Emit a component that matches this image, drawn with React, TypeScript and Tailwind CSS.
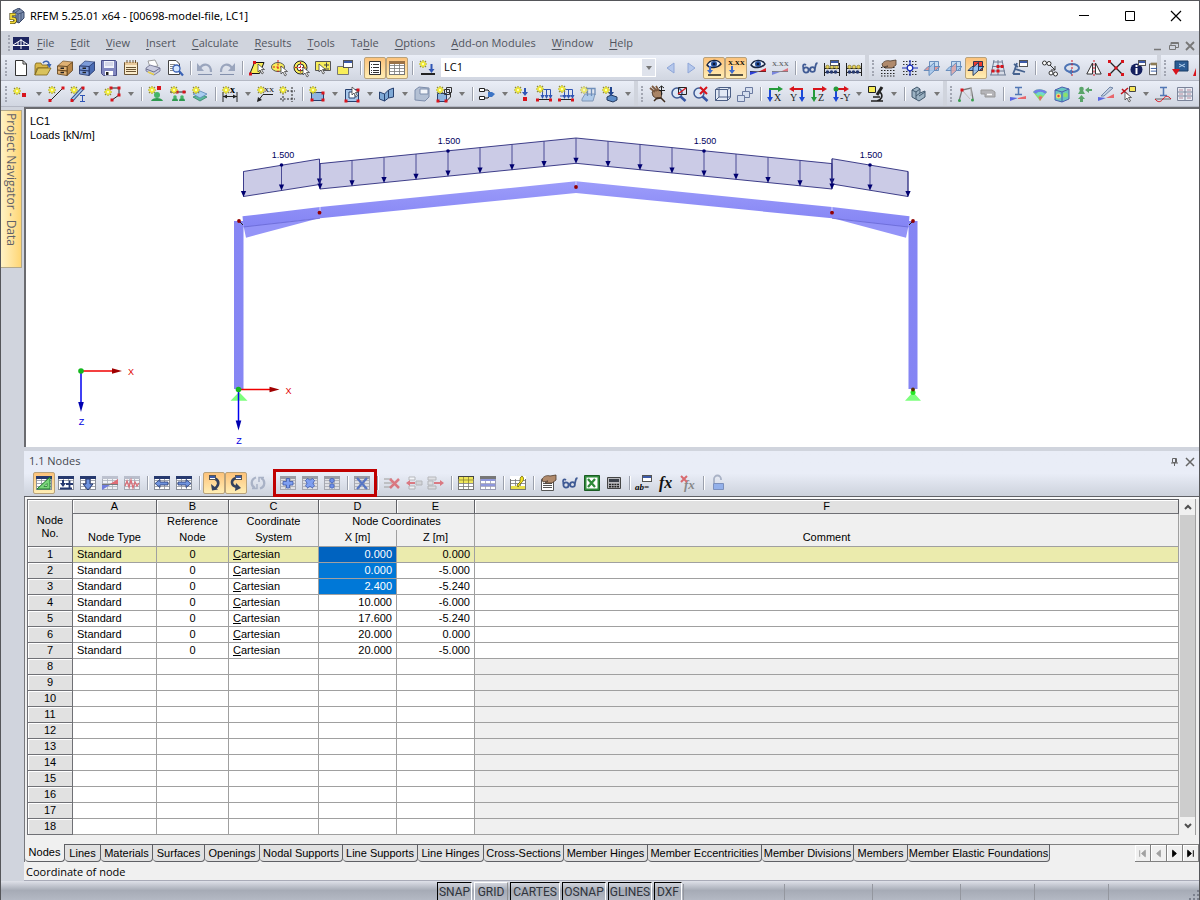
import React, { useState, type ReactNode } from 'react';

/* ---------- drawing helpers ---------- */

type LProps = { d: string; c?: string; w?: number; f?: string };
const L = ({ d, c = '#222', w = 1, f = 'none' }: LProps) => <path d={d} stroke={c} strokeWidth={w} fill={f} />;
const F = ({ d, f = '#222' }: { d: string; f?: string }) => <path d={d} fill={f} />;

const Star = ({ x = 4, y = 4 }: { x?: number; y?: number }) => (
  <g transform={`translate(${x} ${y})`}>
    <path d="M0-4V4M-4 0H4M-3-3L3 3M-3 3L3-3" stroke="#8f8a3a" strokeWidth="1.2" />
    <path d="M0-3.500V3.500M-3.500 0H3.500M-2-2L2 2M-2 2L2-2" stroke="#f4ee2c" strokeWidth="1.3" />
    <circle r="1.200" fill="#fffbb0" />
  </g>
);
const Dots = ({ p }: { p: [number, number][] }) => (
  <g fill="#d8141c">
    {p.map(([x, y]) => (
      <rect key={`${x}-${y}`} x={x - 1.5} y={y - 1.5} width="3" height="3" />
    ))}
  </g>
);
const Down = ({ x, a, b, c = '#2f55b5' }: { x: number; a: number; b: number; c?: string }) => (
  <g>
    <path d={`M${x} ${a}V${b - 2}`} stroke={c} strokeWidth="2" />
    <path d={`M${x - 3} ${b - 4}H${x + 3}L${x} ${b}Z`} fill={c} />
  </g>
);
const Cursor = ({ x = 8, y = 6 }: { x?: number; y?: number }) => (
  <path d={`M${x} ${y}v8l2-2 2 4 1.5-1-2-3.500h3z`} fill="#fff" stroke="#444" strokeWidth=".8" />
);
const Win = ({ x, y, w = 8, h = 7 }: { x: number; y: number; w?: number; h?: number }) => (
  <g>
    <rect x={x + 0.5} y={y + 0.5} width={w} height={h} fill="#fff" stroke="#555" />
    <rect x={x + 1} y={y + 1} width={w - 1} height="2" fill="#3c5aa8" />
  </g>
);
const Grid = ({ h = '#26396f', body = '#fff', line = '#8a8f9a' }: { h?: string; body?: string; line?: string }) => (
  <g>
    <rect x=".5" y="1.5" width="15" height="13" fill={body} stroke={line} />
    <path d="M0 5.500H16M0 8.500H16M0 11.500H16M5.500 2V15M10.500 2V15" stroke={line} strokeWidth=".8" />
    <rect x="0" y="1" width="16" height="3" fill={h} />
  </g>
);
const Plane = ({ c = '#5e86b8', back = '#c5dcf2', side = '#a9cbee', floor = '#e29a9a' }: { c?: string; back?: string; side?: string; floor?: string }) => (
  <g stroke={c} strokeWidth=".9">
    <path d="M5.500 1.500h9v9h-9z" fill={back} />
    <path d="M0 10.500L4 6.500H16L11.500 10.500z" fill={floor} />
    <path d="M5 7.500L10.500 2.500V10.500L5 15.500z" fill={side} fillOpacity=".85" />
  </g>
);
const Axes = ({ t, a = '#1b48d8', b = '#d8141c', flip = false }: { t: string; a?: string; b?: string; flip?: boolean }) => (
  <g>
    <path d={flip ? 'M14 3H4' : 'M2 3H12'} stroke={b} strokeWidth="2" />
    <path d={flip ? 'M0 3l5-3v6z' : 'M16 3l-5-3v6z'} fill={b} />
    <path d={flip ? 'M13 4V12' : 'M3 4V12'} stroke={a} strokeWidth="2" />
    <path d={flip ? 'M10 11h6l-3 5z' : 'M0 11h6l-3 5z'} fill={a} />
    <text x={flip ? 1 : 7} y="15" fontSize="10" fontFamily="Liberation Serif, serif" fill="#222">{t}</text>
  </g>
);
const Beads = () => (
  <g>
    <path d="M.5 3V16M15.500 3V16M0 8.500H16M0 12.500H16" stroke="#222" />
    <g fill="#26396f">
      <circle cx="3.500" cy="12" r="1.800" /><circle cx="7.500" cy="12" r="1.800" /><circle cx="11.500" cy="12" r="1.800" />
    </g>
    <g fill="#e3cf5a" stroke="#776a1b" strokeWidth=".6">
      <circle cx="3.500" cy="7" r="1.800" /><circle cx="8" cy="7" r="1.800" /><circle cx="12.500" cy="7" r="1.800" />
    </g>
  </g>
);
const Specs = () => (
  <g fill="none" stroke="#3f5a94" strokeWidth="1.800">
    <circle cx="4" cy="10" r="2.600" />
    <circle cx="10.500" cy="9.500" r="2.400" />
    <path d="M1.500 9C0 5 2 3.500 4 5M6.500 9.500h2M12.500 8.500c2-2 0-5 3-5.500" />
  </g>
);
const Cabinet = ({ a, b, c }: { a: string; b: string; c: string }) => (
  <g>
    <path d="M10 6L15.500 2V10.500L10 15.500z" fill={b} stroke={c} strokeWidth=".8" />
    <path d="M.5 6L6 1 15.500 2 10 6.500z" fill={a} stroke={c} strokeWidth=".6" />
    <path d="M.500 6L10 6.500V15.500L.500 14z" fill={a} stroke={c} strokeWidth=".8" />
    <path d="M.500 10L10 11" stroke={c} />
    <path d="M3.500 8.300h3.500M3.500 12.600h3.500" stroke="#222" strokeWidth="1.500" />
  </g>
);
const Supports = () => (
  <g>
    <L d="M0 6H16" />
    <Dots p={[[7, 6], [14, 6]]} />
    <F d="M2 15a3 3 0 0 1 6 0zM9 15a3 3 0 0 1 6 0z" f="#2f9a4f" />
    <circle cx="5" cy="11" r="1.800" fill="#46b567" /><circle cx="12" cy="11" r="1.800" fill="#46b567" />
  </g>
);
const Lens = () => (
  <g>
    <circle cx="6" cy="7" r="5" fill="#dbe9fb" fillOpacity=".7" stroke="#3f5a94" strokeWidth="1.500" />
    <path d="M9.500 10.500l5 4.500" stroke="#3555a5" strokeWidth="2.600" />
  </g>
);
const MemberLoad = () => (
  <g>
    <L d="M3 6V3.500H14.500V12M6.500 4V10M10.500 4V10" c="#2f55b5" />
    <F d="M4.500 9h4l-2 4zM8.500 9h4l-2 4zM12.500 9h4l-2 4z" f="#2f55b5" />
    <L d="M0 13.500H16" />
    <Dots p={[[1.5, 14], [14.5, 14]]} />
  </g>
);
const Diagram = ({ o = 1 }: { o?: number }) => (
  <g opacity={o}>
    <path d="M0 9.500H16" stroke="#333" />
    <path d="M0 10v5L8 10z" fill="#2c3fd8" /><path d="M8 9l8-5v5z" fill="#e2202a" />
  </g>
);
const Eye = ({ y = 5 }: { y?: number }) => (
  <g transform={`translate(8 ${y})`}>
    <path d="M-7 1C-4-5 4-5 7 0 4 4-4 5-7 1z" fill="#e8f0fa" stroke="#15233f" strokeWidth="1.400" />
    <circle r="3" fill="#27509c" /><circle r="1.300" fill="#0b1530" />
  </g>
);
const Hand = () => <path d="M2 4c2-3 5-4 8-3l6-1v5l-4 3H5l3-2-5 1z" fill="#b08a6c" stroke="#4b382a" strokeWidth=".8" />;

const sw = 'Liberation Serif, serif';

const icons: Record<string, ReactNode> = {
  new: <g><path d="M2.500.5H10L13.500 4V15.500H2.500Z" fill="#fff" stroke="#333" /><path d="M10 .5V4H13.500" fill="none" stroke="#333" /></g>,
  open: <g><path d="M0 5V15L2 8H13V5H7L6 3H1z" fill="#d8b74a" stroke="#7b6215" strokeWidth=".8" /><path d="M0 15L3 8H16L12 15z" fill="#d9c25c" stroke="#7b6215" strokeWidth=".8" /><path d="M8 3c2-3 6-2 6 1" fill="none" stroke="#3c64b0" strokeWidth="1.500" /><path d="M11.500 4h5l-2 4z" fill="#3c64b0" /></g>,
  cabTan: <Cabinet a="#e0b173" b="#b98646" c="#5b3c15" />,
  cabBlue: <Cabinet a="#7c9bd8" b="#4a6cb3" c="#1d2f63" />,
  save: <g><path d="M.5.5H14.500L15.500 1.500V15.500H2.500L.5 13.500Z" fill="#8288c0" stroke="#4a5088" /><path d="M3 1h10v7H3z" fill="#f0f2fa" /><path d="M4 3h8M4 5h8" stroke="#b9bdd8" /><path d="M4 11h8v4.500H4z" fill="#fff" /><path d="M5 12h2.500v3H5z" fill="#222" /></g>,
  notes: <g><path d="M1.500 2.500h13v12h-13z" fill="#fbeccb" stroke="#6b5434" /><path d="M2 2h12v3H2z" fill="#e8c89a" /><path d="M3 7.500h10M3 9.500h10M3 11.500h10M4 0v3M7 0v3M10 0v3M12.500 0v3" stroke="#6b5434" /></g>,
  print: <g><path d="M3 1l7-1 3 6-8 1z" fill="#fff" stroke="#888" strokeWidth=".8" /><path d="M1 8l4-3 10 3v3l-6 4-8-4z" fill="#c9cbe0" stroke="#6a6d8b" strokeWidth=".8" /><path d="M1 9l8 3 6-4" fill="none" stroke="#6a6d8b" /><path d="M3 12l6 2.500" stroke="#ead34a" strokeWidth="1.500" /></g>,
  preview: <g><path d="M1.500.5H9L12.500 4V14.500H1.500Z" fill="#fff" stroke="#444" /><path d="M3 4.500h5M3 6.500h7M3 8.500h4M3 10.500h3" stroke="#888" /><circle cx="9.500" cy="8.500" r="3.500" fill="#d4e6ff" stroke="#3a62b5" strokeWidth="1.300" /><path d="M12 11l4 4.500" stroke="#3a62b5" strokeWidth="2.200" /></g>,
  undo: <g><path d="M3 8c3-5 11-5 11 4" fill="none" stroke="#9aa5bd" strokeWidth="2.200" /><path d="M0 3v8h7z" fill="#9aa5bd" /><path d="M1 14.500H15" stroke="#8390ac" /></g>,
  redo: <g><path d="M13 8c-3-5-11-5-11 4" fill="none" stroke="#9aa5bd" strokeWidth="2.200" /><path d="M16 3v8H9z" fill="#9aa5bd" /><path d="M1 14.500H15" stroke="#8390ac" /></g>,
  selRhomb: <g><path d="M5.500 2.500H15L10.500 13.500H1z" fill="#f8ee5a" stroke="#111" /><Dots p={[[5.5, 2.5], [1.5, 14]]} /><Cursor x={9} y={4} /></g>,
  selEllipse: <g><ellipse cx="7" cy="7" rx="6.500" ry="4.500" fill="#f8ee5a" stroke="#555" /><path d="M7 0v12M2 7h10" stroke="#d8141c" strokeDasharray="2 1.500" /><Cursor x={10} y={6} /></g>,
  selRing: <g><circle cx="7.500" cy="7.500" r="6.500" fill="#f8ee5a" stroke="#222" /><circle cx="7.500" cy="7.500" r="3.500" fill="#fff" stroke="#222" /><path d="M7.500 2v11M2 7.500h11" stroke="#d8141c" strokeDasharray="2 1.500" /><Cursor x={10} y={7} /></g>,
  selRect: <g><path d="M.5 1.500h15v9H.5z" fill="#f8ee5a" stroke="#555" /><path d="M9 5h5M11.500 2.500v5M9 9h5" stroke="#444" /><Cursor x={4} y={4} /></g>,
  selWin: <g><path d="M.5 6.500h11v8h-11z" fill="#f8ee5a" stroke="#777" /><Win x={6} y={0} w={9} h={7} /></g>,
  navTab: <g><path d="M2.500 1.500h11v13h-11z" fill="#fff" stroke="#333" /><path d="M4 4.500h1M4 7.500h1M4 10.500h1M4 12.500h1M6 4.500h6M6 7.500h6M6 10.500h6M6 12.500h6" stroke="#333" /></g>,
  tblTab: <Grid h="#9a7246" body="#fff" line="#777" />,
  newLc: <g><Star x={4} y={4} /><Down x={12.5} a={4} b={13} /><L d="M2 14H16" w={2} /></g>,
  prev: <path d="M12 3v10L5 8z" fill="#b5c8ec" stroke="#8fa6d8" />,
  next: <path d="M4 3v10l7-5z" fill="#b5c8ec" stroke="#8fa6d8" />,
  eyeLoad: <g><Eye y={4} /><Down x={4} a={6} b={14} c="#3c6ad0" /><L d="M2 15H15" w={1.5} /></g>,
  xLoad: <g><text x="0" y="5" fontSize="7" fontFamily={sw} fontWeight="bold">X.XX</text><Down x={4} a={6} b={14} c="#3c6ad0" /><L d="M2 15H15" w={1.5} /></g>,
  eyeRes: <g><Eye y={4} /><path d="M0 11v4l8-3z" fill="#2c3fd8" /><path d="M8 12l8-4v4z" fill="#e2202a" /><L d="M0 11.500H16" w={0.6} /></g>,
  xRes: <g opacity=".55"><text x="0" y="6" fontSize="7" fontFamily={sw} fontWeight="bold">X.XX</text><path d="M0 11v4l8-3z" fill="#2c3fd8" /><path d="M8 12l8-4v4z" fill="#e2202a" /><L d="M0 11.500H16" w={0.8} /></g>,
  specs: <Specs />,
  abacusWin: <g><Beads /><Win x={6} y={0} w={8} h={5} /></g>,
  abacus: <Beads />,
  gridHand: <g><path d="M1 7.500h15M1 10.500h15M1 13.500h15M1 16h15" stroke="#222" strokeDasharray="1.500 1.500" /><Hand /></g>,
  gridCross: <g><path d="M1 1.500h15M1 4.500h15M1 11.500h15M1 14.500h15" stroke="#333" strokeDasharray="1.500 1.500" /><path d="M8 0v16M0 8h16" stroke="#1d2fb5" strokeWidth="1.200" /><circle cx="8" cy="8" r="2.800" fill="#fff" stroke="#1d2fb5" strokeWidth="1.300" /></g>,
  planeA: <Plane />,
  planeB: <Plane side="#e2a5a5" floor="#a9cbee" />,
  planeC: <Plane back="#f03a2c" side="#9cc6f2" floor="#7fb2ea" c="#1c2c50" />,
  gridRed: <g><path d="M3 2h9M2 6.500h12M1 11h14M0 15h16M4 0L1 15M8 0v15M12 0l3 15" stroke="#6e7c94" fill="none" /><Dots p={[[8, 6.5], [3, 11], [8, 11], [12, 6.5]]} /></g>,
  netWin: <g><path d="M5 3L3 9l10 3M3 9l-2 5M2 4l4 3M1 14h7" fill="none" stroke="#45628f" strokeWidth="1.800" /><Win x={7} y={0} w={8} h={6} /></g>,
  move: <g fill="#fff" stroke="#333"><circle cx="2.500" cy="3" r="2" /><circle cx="7" cy="3.500" r="2" /><circle cx="9" cy="13" r="2" /><circle cx="13.500" cy="14" r="2" /><path d="M8 5l5 5M13 6v4H9" fill="none" /></g>,
  rotate: <g><ellipse cx="8" cy="8" rx="7" ry="4" fill="none" stroke="#4d74b5" strokeWidth="2" /><path d="M8 0v16" stroke="#d8141c" strokeDasharray="2 1.500" /><path d="M8 9v6l-4-3z" fill="#4d74b5" /></g>,
  mirror: <g><path d="M6.500 3v11H.8zM9.500 3v11h5.700z" fill="#fff" stroke="#333" /><path d="M8 0v16" stroke="#d8141c" strokeDasharray="2 1.500" /></g>,
  explode: <g><L d="M1 1L15 15M15 1L1 15" w={1.3} /><Dots p={[[1.5, 1.5], [14.5, 1.5], [1.5, 14.5], [14.5, 14.5], [8, 8]]} /></g>,
  info: <g><circle cx="6.500" cy="9.500" r="6" fill="#14205e" /><path d="M6.500 5v2M6.500 8v6" stroke="#fff" strokeWidth="2" /><Win x={8} y={0} w={7} h={5} /></g>,
  clip: <g><path d="M7.500 3.500h8v12h-8z" fill="#fff" stroke="#444" /><path d="M9 2h7v3H9z" fill="#8b7a55" /><path d="M9 8.500h7M9 11.500h7" stroke="#27509c" /></g>,
  addon: <g><path d="M3 1h13v10H3z" fill="#2a5c94" stroke="#183c66" /><path d="M7 4l6 3M7 7l6-3" stroke="#b5d3f0" /><path d="M0 9h8l-4 6z" fill="#d8141c" /></g>,
  sliver: <path d="M5 16V8l-3 8z" fill="#d8141c" />,

  node: <g><Star x={4} y={5} /><path d="M9 7h4v4H9z" fill="#d8141c" /></g>,
  line: <g><L d="M3 14L15 2" /><Dots p={[[2, 14.5], [15, 2]]} /><Star x={4} y={4} /></g>,
  member: <g><path d="M2 14L13 2" stroke="#2f4f85" strokeWidth="3.500" /><path d="M2 14L13 2" stroke="#a9c9f0" strokeWidth="1.800" /><Dots p={[[2, 14.5], [13, 2]]} /><Star x={4} y={4} /><path d="M10 9.500h5M12.500 10v5M10 15.500h5" stroke="#2f55b5" /></g>,
  polyline: <g><L d="M5 2h9v7L7 14" /><Dots p={[[6, 2], [14, 2], [14, 9], [7, 14]]} /><Star x={3} y={6} /></g>,
  support: <g><Star x={4} y={4} /><path d="M9 0h4v4H9z" fill="#d8141c" /><path d="M3 15c1-4 11-4 12 0z" fill="#2f9a4f" /><circle cx="9" cy="9" r="3" fill="#46b567" /></g>,
  lineSupport: <g><Supports /><Star x={4} y={4} /></g>,
  surfSupport: <g><path d="M1 11l7-3 7 3-7 4z" fill="#5bb89a" stroke="#36836a" strokeWidth=".8" /><path d="M1 8l7-3 7 3-7 4z" fill="#a9cdf0" stroke="#5a86b5" strokeWidth=".8" /><Star x={4} y={4} /></g>,
  dim: <g><L d="M1 6V16M15 6V16M1 10.500H15" /><F d="M1 10.500l4-2v4zM15 10.500l-4-2v4z" /><text x="8" y="7" fontSize="10" fontFamily={sw} fontWeight="bold">x</text><Star x={4} y={4} /></g>,
  note: <g><L d="M1 15L6 8.500H16" /><F d="M0 16l1-5 4 3z" /><text x="7" y="6" fontSize="7" fontFamily={sw}>XX</text><Star x={4} y={4} /></g>,
  guide: <g><path d="M4 3v13M13 1v15M1 5h15M1 13h15" stroke="#222" strokeDasharray="2 1.500" /><Star x={4} y={4} /></g>,
  surface: <g><path d="M2.500 6.500h12v8h-12z" fill="#8fb5e0" stroke="#26406f" /><Dots p={[[3, 14], [14, 7], [14, 14]]} /><Star x={4} y={4} /></g>,
  opening: <g><path d="M1.500 3.500h13v12h-13z" fill="#a9c9ec" stroke="#26406f" /><path d="M5 6h6v6H5z" fill="#fff" stroke="#26406f" /><Cursor x={8} y={1} /><Dots p={[[2, 15], [14, 15], [14, 4]]} /></g>,
  bent: <g><path d="M.5 6l5 2 4-4 5-2v9l-5 1-4 3-5-2z" fill="#7fa9d6" stroke="#26406f" /><path d="M5.500 8v7M9.500 4v8" stroke="#26406f" /></g>,
  solid: <g><path d="M1 4l4-3 10 1v9l-4 4-10-1z" fill="#b3c0d4" stroke="#7d8dab" /><path d="M6 3h8v5H6z" fill="#f2f5fa" stroke="#7d8dab" /></g>,
  solidNew: <g><path d="M1.500 7.500h9v8h-9z" fill="#8fb5e0" stroke="#26406f" /><path d="M8.500 3.500h5v5h-5zM10.500 1.500h5v5h-5z" fill="none" stroke="#333" /><path d="M10.500 15l4-4V7" fill="none" stroke="#333" /><Dots p={[[2, 15], [10, 15]]} /><Star x={4} y={4} /></g>,
  parts: <g><path d="M.5 2.500h5v3h-5zM.5 10.500h5v3h-5z" fill="#fff" stroke="#222" /><path d="M6 4h3l3 4-3 4H6" fill="none" stroke="#222" /><path d="M9 6h4l3 2-3 3H9z" fill="#3c74c5" /></g>,
  nodeLoad: <g><Star x={4} y={4} /><Down x={11} a={2} b={10} /><path d="M9 11h4v4H9z" fill="#d8141c" /></g>,
  memLoad: <g><MemberLoad /><Star x={4} y={3} /></g>,
  lineLoad: <g><MemberLoad /><Star x={4} y={3} /><path d="M2 10h13" stroke="#2f55b5" /></g>,
  surfLoad: <g opacity=".7"><path d="M2 13l3-5h10l-2 7H2z" fill="#9fc3ea" stroke="#5a7aa5" /><path d="M4 2.500h11V9M7.500 3v7M11.500 3v7" fill="none" stroke="#3f6aa5" strokeWidth="1.300" /><Star x={4} y={4} /></g>,
  genLoad: <g><path d="M5 11l4-2 6 2v3l-4 2-6-2z" fill="#5c8cc8" stroke="#22385f" /><Down x={9} a={1} b={10} c="#22458f" /><Star x={4} y={4} /></g>,
  handPan: <g><path d="M3 6l3-2 5 0 2 3-1 5-4 1-4-3z" fill="#a98466" stroke="#3c2a1c" strokeWidth=".8" /><path d="M1 2l5 4M3 0l5 5M7 0l3 5" stroke="#7d5a40" strokeWidth="1.800" /><path d="M12.500 0v9M10 4.500h6M10 2l2.500-2L15 2" stroke="#222" fill="none" /><path d="M5 15l3-3h4l4 4" stroke="#3c2a1c" strokeWidth="1.500" fill="none" /></g>,
  zoomWin: <g><Lens /><path d="M7.500 1.500h8v7h-8z" fill="none" stroke="#222" /><path d="M7 8l8-6" stroke="#d8141c" strokeWidth="1.300" /></g>,
  zoomX: <g><Lens /><path d="M7 1l7 7M14 1L7 8" stroke="#d8141c" strokeWidth="2" /></g>,
  cube: <g><path d="M.5 3.500l3-2h12v10l-3 3h-12z" fill="#e3eaf5" stroke="#4c5f85" /><path d="M.5 3.500h12v11M12.500 3.500l3-2M4 2v9h11M4 11l-3.500 3.500" fill="none" stroke="#4c5f85" /></g>,
  stack: <g fill="#d5deef" stroke="#6b7aa0"><path d="M8.500 1.500h7v6h-7z" /><path d="M5.500 5.500h7v6h-7z" /><path d="M.5 9.500h7v6h-7z" /></g>,
  axX: <Axes t="X" b="#259b3a" />,
  axY: <Axes t="Y" flip />,
  axZ: <Axes t="Z" a="#259b3a" />,
  axMY: <g><Axes t="-Y" /><circle cx="3" cy="3" r="2.500" fill="#259b3a" /></g>,
  scope: <g><path d="M.5.5h7v6h-7z" fill="#f8ee5a" stroke="#222" /><path d="M14 1L9 9" stroke="#222" strokeWidth="3" /><path d="M3 15h12M5 11h7M12 6c4 4 1 8-3 9" stroke="#222" strokeWidth="1.600" fill="none" /></g>,
  clipSolid: <g><path d="M1 4l5-3 3 2v4l5-2v6l-6 4-7-4z" fill="#9db3c4" stroke="#42596e" /><path d="M1 4l4 2v7M5 6l4-3M9 7l-4 3M8 10l6-4" fill="none" stroke="#42596e" /></g>,
  frame: <g><path d="M1 15L4 4 13 2l2 11" fill="none" stroke="#777" strokeWidth="1.300" /><path d="M4 4l8 9M13 2v8" stroke="#bbb" /><g fill="#3aa04f"><circle cx="1.500" cy="14.500" r="1.500" /><circle cx="14.500" cy="14" r="1.500" /></g><Dots p={[[4, 4]]} /></g>,
  tube: <g><path d="M1 4h11l3 2v5H5V8H1z" fill="#b4b4b8" stroke="#999" /><path d="M7 8.500h5" stroke="#fff" strokeWidth="1.500" /></g>,
  iDiag: <g><L d="M5 1.500h7M8.500 2v6M5 8.500h7" c="#5277b5" w={1.5} /><path d="M0 11v4l8-3z" fill="#5a66e0" /><path d="M8 12l8-2v3H8z" fill="#e8666c" /></g>,
  surfRes: <g><path d="M1 6c4-4 10-3 14 0l-7 9z" fill="#8be06a" /><path d="M1 6c4-4 10-3 14 0l-2 2C9 5 6 6 4 8z" fill="#6d7fe8" /><path d="M4 8c3-3 6-3 9 0l-2 2c-2-2-3-2-5 0z" fill="#6fd8d0" /><path d="M6.500 11c1-1 3-1 4 0L8 15z" fill="#e8666c" /></g>,
  solRes: <g><path d="M1 4l7-3 7 2v10l-7 3-7-2z" fill="#68c6c0" stroke="#4a5fb0" /><path d="M1 4l7 2 7-3M8 6v10" fill="none" stroke="#4a5fb0" /><circle cx="4.500" cy="10" r="2.500" fill="#eee06a" /><circle cx="4.500" cy="10" r="1.200" fill="#e04040" /><circle cx="11.500" cy="9" r="2.300" fill="#8be06a" /></g>,
  react: <g fill="#5aa56a"><path d="M2 8h7L5.500 2zM7 16v-3h2l-3.500-4L2 13h2v3z" /><circle cx="5.500" cy="3" r="2.300" /><path d="M16 3h-3V1L9 4l4 3V5h3z" /></g>,
  beamDiag: <g><path d="M3 10L12 1l3 1-9 8z" fill="#c3d0e2" stroke="#7186a8" /><path d="M0 11v4l8-3z" fill="#5a66e0" /><path d="M8 12l8-4v4z" fill="#e8666c" /></g>,
  pick: <g><L d="M1 8L8 2M2 3l6 6" c="#c01018" w={1.5} /><path d="M9.500.5h6v5h-6z" fill="#f8e85a" stroke="#444" /><Cursor x={5} y={6} /></g>,
  iWave: <g><L d="M5 1.500h7M8.500 2v7M5 9.500h7" c="#5277b5" w={1.5} /><path d="M0 13h16" stroke="#444" strokeWidth=".8" /><path d="M0 13c3 4 6 3 8 0s5-4 8 0" fill="none" stroke="#d8141c" /></g>,
  panels: <g><path d="M.5 1.500h15v13H.5zM8 2v12M0 6h16M0 10h16" fill="#e9ecf4" stroke="#7b8399" /><path d="M2 4h4M10 4h4M2 8h4M10 8h4M2 12h4M10 12h4" stroke="#b58a9a" /></g>,

  gTri: <g><Grid /><path d="M1 14L14 2V14z" fill="#7ad67a" stroke="#1f7a2b" /><path d="M8 11.500L11 8.500V11.500z" fill="#fff" stroke="#1f7a2b" strokeWidth=".8" /></g>,
  gPlus: <g><Grid /><path d="M1 6h14v8H1z" fill="#fff" /><Down x={5} a={5} b={12} c="#26396f" /><path d="M8 9h7M11.500 5.500v7M2 13.500h12" stroke="#26396f" strokeWidth="1.800" /></g>,
  gDown: <g><Grid /><path d="M6 4h4v5h3l-5 6-5-6h3z" fill="#6f93de" stroke="#26396f" /></g>,
  gDiag: <g opacity=".6"><Grid h="#a3a8b8" /><Diagram /></g>,
  gWave: <g opacity=".65"><Grid h="#a3a8b8" /><path d="M1 11l2-5 2 6 2-7 2 8 2-6 2 4 2-3" fill="none" stroke="#d8343c" strokeWidth="1.300" /></g>,
  gLeft: <g><Grid /><path d="M1 8.500l5-4v2.500h8v3H6v2.500z" fill="#6f93de" stroke="#26396f" strokeWidth=".8" /></g>,
  gRight: <g><Grid /><path d="M15 8.500l-5-4v2.500H2v3h8v2.500z" fill="#6f93de" stroke="#26396f" strokeWidth=".8" /></g>,
  linkA: <g><path d="M9 3.500C14 6 13 11 8 14" fill="none" stroke="#33405e" strokeWidth="2.600" /><path d="M5 9l1 6.500 6-1z" fill="#33405e" /><Win x={3} y={0} w={6} h={4} /></g>,
  linkB: <g><path d="M8 3C2 5 3 11 9 12" fill="none" stroke="#33405e" strokeWidth="2.600" /><path d="M8 8l5 5-6 3z" fill="#33405e" /><Win x={7} y={0} w={6} h={4} /></g>,
  refresh: <g fill="none" stroke="#a9b2c6" strokeWidth="2.300"><path d="M6 2.500C.5 4 .5 11 5 13M10 13.500c5.500-1.500 5.500-8.500 1-10.500" /><path d="M2 13.500h5V9M14 2.500H9V7" strokeWidth="1.500" /></g>,
  opPlus: <g><Grid h="#9a9ca5" body="#dfe0e5" line="#a5a7b0" /><path d="M6.500 3.500h3v3h3.500v3.500H9.500v3h-3v-3H3V6.500h3.500z" fill="#7f9ff0" stroke="#3a58ac" strokeWidth=".8" /></g>,
  opMul: <g><Grid h="#9a9ca5" body="#dfe0e5" line="#a5a7b0" /><path d="M3.500 5.500l2-2L8 5l2.500-1.500 2 2L11 8.300l1.500 2.500-2 2L8 11.500l-2.500 1.300-2-2L5 8.300z" fill="#7f9ff0" stroke="#3a58ac" strokeWidth=".8" /></g>,
  opDiv: <g><Grid h="#9a9ca5" body="#dfe0e5" line="#a5a7b0" /><circle cx="8" cy="5.500" r="2.200" fill="#6f8fe8" stroke="#3a58ac" strokeWidth=".7" /><circle cx="8" cy="11" r="2.200" fill="#6f8fe8" stroke="#3a58ac" strokeWidth=".7" /></g>,
  opDel: <g><Grid h="#9a9ca5" body="#dfe0e5" line="#a5a7b0" /><path d="M3 3l10 11M13 3L3 14" stroke="#5876c4" strokeWidth="2.300" /></g>,
  rowDel: <g opacity=".6"><path d="M0 3h8v2H0zM0 7h8v2H0zM0 11h8v2H0z" fill="#aaa" /><path d="M6 4l9 9M15 4l-9 9" stroke="#d8343c" strokeWidth="2.500" /></g>,
  rowIn: <g opacity=".6"><path d="M3 2h6v3H3zM3 11h6v3H3z" fill="#fff" stroke="#999" /><path d="M10 6h6v4h-6z" fill="#ccc" stroke="#999" /><path d="M0 8l4-3v2h5v2H4v2z" fill="#d8343c" /></g>,
  rowOut: <g opacity=".6"><path d="M0 2h8v3H0zM0 11h8v3H0zM0 6h5v4H0z" fill="#ddd" stroke="#999" /><path d="M16 8l-4-3v2H6v2h6v2z" fill="#d8343c" /></g>,
  tYellow: <g><Grid h="#444" body="#fff" line="#777" /><path d="M1 2h14v6H1z" fill="#efe65a" /><path d="M0 5h16M5.500 2v6M10.500 2v6" stroke="#8a8430" strokeWidth=".8" /></g>,
  tBlue: <g><Grid h="#777" body="#fff" line="#9a9cb5" /><path d="M1 4h14v2H1zM1 9h14v2H1z" fill="#8f97dc" /></g>,
  tBulb: <g><Grid h="#fff" body="#fff" line="#777" /><path d="M1 11h14v3H1z" fill="#e9e04a" /><path d="M12 1c3 2 1 6-1 7l-3 4-1-2 3-3c0-3 0-5 2-6z" fill="#f7e71f" stroke="#6b6210" strokeWidth=".8" /></g>,
  form: <g><path d="M1.500 4.500h12v11h-12z" fill="#fff" stroke="#555" /><path d="M3 8.500h9M3 10.500h9M3 12.500h9" stroke="#555" /><Hand /></g>,
  excel: <g><path d="M.5.5h15v15H.5z" fill="#2f8a3a" stroke="#1b5c24" /><path d="M2.500 2.500h11v11h-11z" fill="#fff" /><path d="M4 4l7 8M11 4l-7 8" stroke="#2f8a3a" strokeWidth="2.300" /></g>,
  calc: <g><path d="M1.500 2.500h13v11h-13z" fill="#b8b8bc" stroke="#444" /><path d="M3 4h10v3H3z" fill="#3a3f48" /><path d="M3 9.500h10M3 11.800h10" stroke="#222" strokeWidth="1.500" strokeDasharray="2 .7" /></g>,
  abEq: <g><Win x={6} y={0} w={9} h={6} /><text x="-1" y="15" fontSize="9" fontStyle="italic" fontWeight="bold" fontFamily={sw}>ab=</text></g>,
  fx: <text x="1" y="13" fontSize="16" fontStyle="italic" fontWeight="bold" fontFamily={sw} fill="#111">fx</text>,
  fxDel: <g><text x="4" y="14" fontSize="13" fontStyle="italic" fontWeight="bold" fontFamily={sw} fill="#888">fx</text><path d="M1 1l6 6M7 1L1 7" stroke="#d86a70" strokeWidth="2" /></g>,
  lock: <g><path d="M4 8V4a3.500 3.500 0 0 1 7 0v1" fill="none" stroke="#a9b2c6" strokeWidth="1.800" /><path d="M3.500 8.500h10v6h-10z" fill="#93b0ea" stroke="#7c90bd" /></g>,
};

/* ---------- toolbar parts ---------- */

const Icon = ({ n }: { n: string }) => (
  <svg viewBox="0 0 16 16" className="size-4 shrink-0 overflow-visible" aria-hidden="true">{icons[n]}</svg>
);

const Tool = ({ n }: { n: string }) => {
  const on = n.startsWith('*');
  const name = on ? n.slice(1) : n;
  return (
    <button
      type="button"
      aria-label={name}
      aria-pressed={on}
      className={`flex h-[22px] w-[22px] shrink-0 items-center justify-center ${on ? 'rounded-xs border border-[#b9a27a] bg-linear-to-b from-[#fcc27a] to-[#ffeeb4]' : ''}`}
    >
      <Icon n={name} />
    </button>
  );
};

const Sep = () => (
  <span className="flex w-2 shrink-0 justify-center">
    <span className="h-3.5 w-px bg-[#9ba0ac] shadow-[1px_0_0_#fff]" />
  </span>
);
const Grip = () => (
  <span className="flex w-2 shrink-0 justify-center">
    <span className="h-4 border-l-2 border-dotted border-[#a2a6b2]" />
  </span>
);
const Break = () => <span className="w-1 shrink-0 self-stretch bg-[#d0d4dd]" />;
const Drop = () => (
  <button type="button" aria-label="More" className="flex h-[22px] w-[13px] shrink-0 items-center justify-center">
    <svg viewBox="0 0 6 4" className="h-1 w-1.5" aria-hidden="true"><path d="M0 0h6L3 4z" fill="#777" /></svg>
  </button>
);

const Tools = ({ spec }: { spec: string }) => (
  <>
    {spec.split(' ').map((t, i) => {
      if (t === '|') return <Sep key={i} />;
      if (t === '::') return <Grip key={i} />;
      if (t === '//') return <Break key={i} />;
      if (t === 'v') return <Drop key={i} />;
      return <Tool key={i} n={t} />;
    })}
  </>
);

const menus: [string, string, string][] = [
  ['', 'F', 'ile'], ['', 'E', 'dit'], ['', 'V', 'iew'], ['', 'I', 'nsert'], ['', 'C', 'alculate'], ['', 'R', 'esults'],
  ['', 'T', 'ools'], ['Ta', 'b', 'le'], ['', 'O', 'ptions'], ['', 'A', 'dd-on Modules'], ['', 'W', 'indow'], ['', 'H', 'elp'],
];

/* ---------- model view ---------- */

const loadArrows = () => {
  const out: [number, number, number][] = [[243.5, 171.5, 196.5], [281.5, 165, 190], [319.5, 159, 184], [908, 171.5, 196.5], [870, 165, 190], [832, 159, 184]];
  for (let i = 0; i <= 16; i++) {
    const top = 138 + Math.abs(i - 8) * 3.2;
    out.push([320 + i * 32, top, top + 25.3]);
  }
  return out;
};

const ModelView = () => (
  <svg viewBox="26 109 1173 338" preserveAspectRatio="xMidYMin meet" className="absolute inset-0 h-full w-full" role="img" aria-label="Frame model with loads">
    <defs>
      <linearGradient id="beam" x1="0" y1="0" x2="0" y2="1"><stop offset="0" stopColor="#9c9cfa" /><stop offset="1" stopColor="#8484f4" /></linearGradient>
      <linearGradient id="post"><stop offset="0" stopColor="#8686f4" /><stop offset=".4" stopColor="#9797fa" /><stop offset="1" stopColor="#8484f4" /></linearGradient>
    </defs>
    <g fill="#cbcbe6" stroke="#14146e" strokeWidth=".8">
      <path d="M243.500 171.500L319.500 159V184.500L243.500 196.500z" />
      <path d="M320 163.600L576 138L832 163.600V189L576 163.300L320 189z" />
      <path d="M832 158.700L908 171.500V196.500L832 184z" />
    </g>
    {loadArrows().map(([x, a, b], i) => (
      <g key={i}>
        <path d={`M${x} ${a}V${b - 3}`} stroke="#3c3c8c" strokeWidth=".9" />
        <path d={`M${x - 2.6} ${b - 5.5}h5.200L${x} ${b + 0.5}z`} fill="#000070" />
      </g>
    ))}
    <g fill="#000070">
      <circle cx="281.500" cy="165" r="1.800" /><circle cx="448" cy="151" r="1.800" /><circle cx="704" cy="151" r="1.800" /><circle cx="870" cy="165" r="1.800" />
    </g>
    <g fill="#000060" fontFamily="Liberation Sans, sans-serif" fontSize="9" textAnchor="middle">
      <text x="283" y="158">1.500</text><text x="449" y="144">1.500</text><text x="705" y="144">1.500</text><text x="871" y="158">1.500</text>
    </g>
    <path d="M243.500 226L246 237.700L320 218zM908.500 226L906 237.700L832 218z" fill="#9494f8" />
    <path d="M242.500 216.300L320 207L576 181.300L832 207L909.500 216.300L908.500 227L832 218.300L576 193L320 218.300L243.500 227z" fill="url(#beam)" />
    <path d="M243.500 227L320 218.300M908.500 227L832 218.300" stroke="#5b5bc8" strokeWidth=".6" />
    <path d="M320 207v5M576 181v5M832 207v5" stroke="#dcdcff" />
    <path d="M234 221h9.500v168H234zM908.500 221h9v168h-9z" fill="url(#post)" />
    <path d="M239 221l4 4M913 221l-4 4" stroke="#222" />
    <g fill="#7dff7d"><path d="M239 392l8.500 8.700h-17zM913 392l8 8.700h-16z" /></g>
    <g fill="#920000">
      <circle cx="239" cy="221" r="1.900" /><circle cx="319.500" cy="212.700" r="1.900" /><circle cx="576" cy="187" r="1.900" /><circle cx="832" cy="212.700" r="1.900" /><circle cx="913" cy="221" r="1.900" />
    </g>
    <circle cx="913" cy="392.500" r="2.500" fill="#26e626" /><circle cx="913" cy="389.500" r="1.900" fill="#5a3000" />
    {[[81, 371], [238.5, 389.5]].map(([x, y]) => (
      <g key={x}>
        <path d={`M${x} ${y}h32`} stroke="#f00000" strokeWidth="1.500" />
        <path d={`M${x + 31} ${y - 2.8}l10 2.800l-10 2.800z`} fill="#a00000" />
        <path d={`M${x} ${y}v32`} stroke="#0000f0" strokeWidth="1.500" />
        <path d={`M${x - 2.8} ${y + 31}h5.600l-2.800 10z`} fill="#0000b0" />
        <circle cx={x} cy={y} r="2.800" fill="#14b81e" />
        <text x={x + 50} y={y + 4} fontSize="9" textAnchor="middle" fontFamily="Liberation Sans, sans-serif" fill="#e00000">X</text>
        <text x={x + 0.5} y={y + 54} fontSize="9" textAnchor="middle" fontFamily="Liberation Sans, sans-serif" fill="#0000e0">Z</text>
      </g>
    ))}
  </svg>
);

/* ---------- data table ---------- */

const rows: [string, string][] = [['0.000', '0.000'], ['0.000', '-5.000'], ['2.400', '-5.240'], ['10.000', '-6.000'], ['17.600', '-5.240'], ['20.000', '0.000'], ['20.000', '-5.000']];

const letter = 'h-[15px] border-y border-r border-t-[#5f6065] border-r-[#5f6065] border-b-[#6f7075] bg-[#e1e1e1] p-0 font-normal leading-[13px] shadow-[inset_1px_1px_0_#fff]';
const head = 'h-4 border-r border-[#a0a0a0] bg-[#f0f0f0] p-0 align-top font-normal leading-[14px]';
const head2 = 'h-[17px] border-r border-b border-[#a0a0a0] bg-[#f0f0f0] p-0 align-top font-normal leading-[14px]';
const cell = 'h-4 border-r border-b border-[#a0a0a0] p-0 leading-[15px]';

const NodesTable = () => (
  <table className="w-full table-fixed border-separate border-spacing-0 text-center text-[11px] text-black">
    <colgroup>
      <col className="w-[46px]" /><col className="w-[84px]" /><col className="w-[72px]" /><col className="w-[90px]" />
      <col className="w-[78px]" /><col className="w-[78px]" /><col />
    </colgroup>
    <thead>
      <tr>
        <th rowSpan={3} scope="col" className="border border-[#6f7075] bg-[#e1e1e1] p-0 pt-2 text-center align-middle font-normal leading-[13px] shadow-[inset_1px_1px_0_#fff]">Node<br />No.</th>
        {['A', 'B', 'C', 'D', 'E', 'F'].map((c) => (
          <th key={c} scope="col" className={letter}>{c}</th>
        ))}
      </tr>
      <tr>
        <th className={head} />
        <th className={head}>Reference</th>
        <th className={head}>Coordinate</th>
        <th className={head} colSpan={2}>Node Coordinates</th>
        <th className={head} />
      </tr>
      <tr>
        {['Node Type', 'Node', 'System', 'X [m]', 'Z [m]', 'Comment'].map((c) => (
          <th key={c} scope="col" className={head2}>{c}</th>
        ))}
      </tr>
    </thead>
    <tbody>
      {Array.from({ length: 18 }, (_, i) => {
        const r = rows[i];
        const bg = i === 0 ? 'bg-[#ebebad]' : 'bg-white';
        const sel = i === 0 ? 'bg-[#0063c0] text-white' : 'bg-[#0078d7] text-white';
        return (
          <tr key={i}>
            <th scope="row" className="h-4 border-x border-b border-[#6f7075] bg-[#e1e1e1] p-0 font-normal leading-[15px] shadow-[inset_1px_1px_0_#fff]">{i + 1}</th>
            <td className={`${cell} ${bg} pl-1 text-left`}>{r && 'Standard'}</td>
            <td className={`${cell} ${bg}`}>{r && '0'}</td>
            <td className={`${cell} ${bg} pl-1 text-left`}>{r && <><u>C</u>artesian</>}</td>
            <td className={`${cell} ${i < 3 ? sel : bg} pr-1 text-right`}>{r?.[0]}</td>
            <td className={`${cell} ${bg} pr-1 text-right`}>{r?.[1]}</td>
            <td className={`${cell} ${r ? bg : 'bg-[#f0f0f0]'}`} />
          </tr>
        );
      })}
    </tbody>
  </table>
);

const tabs: [string, string][] = [
  ['Nodes', 'w-[40px]'], ['Lines', 'w-[36px]'], ['Materials', 'w-[52px]'], ['Surfaces', 'w-[52px]'], ['Openings', 'w-[55px]'],
  ['Nodal Supports', 'w-[83px]'], ['Line Supports', 'w-[75px]'], ['Line Hinges', 'w-[66px]'], ['Cross-Sections', 'w-[80px]'],
  ['Member Hinges', 'w-[84px]'], ['Member Eccentricities', 'w-[114px]'], ['Member Divisions', 'w-[92px]'], ['Members', 'w-[54px]'],
  ['Member Elastic Foundations', 'w-[142px]'],
];

const TabBar = () => {
  const [active, setActive] = useState('Nodes');
  return (
    <div className="flex h-[18px] shrink-0 justify-between overflow-hidden bg-[#f0f0f0] text-[11px] text-black">
      <div role="tablist" className="flex">
        {tabs.map(([t, w]) => (
          <button
            key={t}
            type="button"
            role="tab"
            aria-selected={t === active}
            onClick={() => setActive(t)}
            className={`${w} flex h-full shrink-0 items-center justify-center whitespace-nowrap rounded-b-sm border-r border-b border-[#5f6065] ${t === active ? 'bg-[#f0f0f0]' : 'border-t bg-[#e1e1e1]'}`}
          >
            {t}
          </button>
        ))}
      </div>
      <div className="flex flex-1 justify-end border-t border-[#808080]">
        {[['First', 'M5 1v7M11 1v7L7 4.500z', '#a0a0a0'], ['Previous', 'M10 1v7L6 4.500z', '#a0a0a0'], ['Next', 'M6 1v7l4-3.500z', '#000'], ['Last', 'M5 1v7l4-3.500zM11 1v7', '#000']].map(([n, d, c]) => (
          <button key={n} type="button" aria-label={n} className="flex h-[17px] w-4 items-center justify-center border-r border-b border-[#808080] bg-[#f0f0f0] shadow-[inset_1px_1px_0_#fff]">
            <svg viewBox="0 0 16 9" className="h-[9px] w-4" aria-hidden="true"><path d={d} fill={c} stroke={c} /></svg>
          </button>
        ))}
      </div>
    </div>
  );
};

/* ---------- window ---------- */

const statusCells: [string, string, boolean][] = [
  ['SNAP', 'w-[35px]', true], ['GRID', 'w-[34px]', false], ['CARTES', 'w-[50px]', true], ['OSNAP', 'w-[44px]', true], ['GLINES', 'w-[44px]', true], ['DXF', 'w-[28px]', true],
];

const bar = 'flex h-[26px] shrink-0 items-center overflow-hidden border-b border-[#b4b8c4] bg-linear-to-b from-[#eaeef7] to-[#d1d6e1]';

export default function App() {
  return (
    <div className="flex min-h-screen w-full flex-col overflow-hidden border-x border-t border-[#55565a] bg-[#d0d4dd] font-['Open_Sans','Noto_Sans',sans-serif] text-xs text-black">
      <header className="flex h-[30px] shrink-0 items-center justify-between bg-white pr-[17px] pl-2">
        <div className="flex items-center gap-[5px]">
          <svg viewBox="0 0 16 16" className="size-4" aria-hidden="true">
            <path d="M4 3l6-3 5 4v6l-5 5-6-3z" fill="#7d8fb0" stroke="#39486a" />
            <path d="M4 3l5 3v9M9 6l6-2M6 5l5-4M7 7v6M12 5v8" fill="none" stroke="#39486a" strokeWidth=".8" />
            <path d="M6.500 6.500H2v4h2.500c3 0 2 4 0 4H1" fill="none" stroke="#3d3508" strokeWidth="3" />
            <path d="M6.500 6.500H2v4h2.500c3 0 2 4 0 4H1" fill="none" stroke="#f4dc3c" strokeWidth="1.800" />
          </svg>
          <h1 className="font-['Noto_Sans','Open_Sans',sans-serif] text-[11px]">RFEM 5.25.01 x64 - [00698-model-file, LC1]</h1>
        </div>
        <div className="flex items-center gap-[34px]">
          <button type="button" aria-label="Minimize"><svg viewBox="0 0 12 12" className="size-3"><path d="M1 5.500h10" stroke="#000" /></svg></button>
          <button type="button" aria-label="Maximize"><svg viewBox="0 0 12 12" className="size-3"><path d="M1.500 1.500h9v9h-9z" fill="none" stroke="#000" /></svg></button>
          <button type="button" aria-label="Close"><svg viewBox="0 0 12 12" className="size-3"><path d="M1 1l10 10M11 1L1 11" stroke="#000" strokeWidth="1.200" /></svg></button>
        </div>
      </header>

      <nav className="flex h-6 shrink-0 items-center justify-between pl-1" aria-label="Menu">
        <div className="flex items-center">
          <Grip />
          <svg viewBox="0 0 16 13" className="h-[13px] w-4" aria-hidden="true">
            <path d="M0 0h16v13H0z" fill="#1d2560" />
            <path d="M0 8.500h16M8 2v10M0 8L8 3l8 5M5 5v3M11 5v3" fill="none" stroke="#fff" />
          </svg>
          <div className="flex items-center gap-4 pl-2 text-[11px] text-[#50545e]">
            {menus.map(([a, b, c]) => (
              <button key={b + c} type="button" className="whitespace-nowrap">{a}<u className="underline-offset-2">{b}</u>{c}</button>
            ))}
          </div>
        </div>
        <div className="flex items-center gap-1.5 self-end pr-1 pb-1">
          <button type="button" aria-label="Minimize document"><svg viewBox="0 0 10 10" className="size-2.5"><path d="M1 8.500h7" stroke="#777" strokeWidth="1.500" /></svg></button>
          <button type="button" aria-label="Restore document"><svg viewBox="0 0 10 10" className="size-2.5"><path d="M.5 4.500h6v4h-6zM2 4V1.500h7.500v5H7M2 2.500h7" fill="none" stroke="#777" /></svg></button>
          <button type="button" aria-label="Close document"><svg viewBox="0 0 10 10" className="size-2.5"><path d="M1 1l8 8M9 1L1 9" stroke="#777" strokeWidth="1.800" /></svg></button>
        </div>
      </nav>

      <div className={bar}>
        <div className="flex h-full min-w-0 flex-1 items-center overflow-hidden pl-px">
          <Tools spec=":: new open cabTan cabBlue save notes print preview | undo redo | selRhomb selEllipse selRing selRect selWin | *navTab *tblTab | newLc" />
          <div className="flex h-[19px] w-[221px] shrink-0 px-[3px]">
            <div className="relative flex w-full bg-white">
              <select aria-label="Load case" className="h-full w-full appearance-none px-[3px] text-[11px] outline-none">
                <option>LC1</option>
              </select>
              <span className="pointer-events-none absolute inset-y-px right-px flex w-[13px] items-center justify-center bg-[#dfe3ec]">
                <svg viewBox="0 0 6 4" className="h-1 w-1.5" aria-hidden="true"><path d="M0 0h6L3 4z" fill="#777" /></svg>
              </span>
            </div>
          </div>
          <Tools spec="prev next *eyeLoad *xLoad eyeRes xRes | specs abacusWin abacus // :: gridHand gridCross planeA planeB *planeC gridRed netWin | move rotate mirror explode info" />
          <span className="flex w-2 shrink-0 justify-end overflow-hidden">
            <svg viewBox="7 0 9 16" className="h-4 w-2 shrink-0" aria-hidden="true">{icons.clip}</svg>
          </span>
          <Tools spec="// :: addon" />
          <svg viewBox="0 0 8 16" className="h-4 w-2 shrink-0" aria-hidden="true">{icons.sliver}</svg>
        </div>
      </div>

      <div className={bar}>
        <div className="flex h-full min-w-0 flex-1 items-center overflow-hidden pl-px">
          <Tools spec=":: node v line member v polyline v | support lineSupport surfSupport | dim v note guide | surface v opening v bent v solid solidNew v | parts v nodeLoad memLoad lineLoad surfLoad genLoad v // :: handPan zoomWin zoomX cube stack | axX axY axZ axMY v scope v | clipSolid v // :: frame tube | iDiag surfRes solRes react beamDiag pick v iWave panels" />
        </div>
      </div>

      <div className="flex flex-1">
        <aside className="w-[23px] shrink-0 pt-[3px]">
          <button type="button" className="flex h-[158px] w-[21px] items-start border-y border-r border-[#b3a98c] bg-linear-to-r from-[#fff2c4] to-[#ffd673] pt-[2px] text-xs text-[#5f6068]">
            <span className="w-full whitespace-nowrap text-center leading-[19px] [writing-mode:vertical-rl]">Project Navigator - Data</span>
          </button>
        </aside>

        <main className="flex min-w-0 flex-1 flex-col">
          <section className="relative min-h-[338px] flex-1 border-t-2 border-l-2 border-[#6a6b6f] bg-white" aria-label="Model">
            <ModelView />
            <div className="relative p-1 pt-[5px] font-['Liberation_Sans',sans-serif] text-[11px] leading-[14px]">
              <p>LC1</p>
              <p>Loads [kN/m]</p>
            </div>
          </section>

          <section className="mt-1 flex shrink-0 flex-col" aria-label="Nodes table">
            <div className="flex h-[46px] flex-col border-b border-[#5f6065] bg-linear-to-b from-[#e9edf7] from-50% to-[#cdd2dc]">
              <div className="flex h-[21px] items-center justify-between pr-1 pl-[5px]">
                <h2 className="text-[11px] text-[#44474f]">1.1 Nodes</h2>
                <div className="flex gap-1.5 text-[#777]">
                  <button type="button" aria-label="Pin"><svg viewBox="0 0 10 10" className="size-2.5"><path d="M3.500 1.500h4v4h-4zM2 6h7M5.500 6v3M6.500 2v3" fill="none" stroke="#666" /></svg></button>
                  <button type="button" aria-label="Close panel"><svg viewBox="0 0 10 10" className="size-2.5"><path d="M1 1l8 8M9 1L1 9" stroke="#666" strokeWidth="1.500" /></svg></button>
                </div>
              </div>
              <div className="flex items-center pl-[9px]">
                <Tools spec="*gTri gPlus gDown gDiag gWave | gLeft gRight | *linkA *linkB refresh |" />
                <div className="relative flex items-center">
                  <Tools spec="opPlus opMul opDiv | opDel" />
                  <span className="pointer-events-none absolute -inset-x-1 -inset-y-[3px] border-[3px] border-[#c00000]" />
                </div>
                <Tools spec="| rowDel rowIn rowOut | tYellow tBlue | tBulb | form specs excel calc | abEq fx fxDel | lock" />
              </div>
            </div>

            <div className="flex flex-col border-l border-[#77787d] bg-[#f0f0f0] font-['Liberation_Sans',sans-serif]">
              <div className="flex border-t-2 border-[#fafafa] pr-[3px] pl-0.5">
                <div className="min-w-0 flex-1 pr-px"><NodesTable /></div>
                <div className="flex w-4 flex-col border-r border-[#a0a0a0] bg-[#cdcdcd]">
                  <button type="button" aria-label="Scroll up" className="flex h-4 items-center justify-center bg-[#f0f0f0]"><svg viewBox="0 0 8 6" className="h-1.5 w-2"><path d="M1 5l3-3 3 3" fill="none" stroke="#505050" strokeWidth="2" /></svg></button>
                  <span className="flex-1" />
                  <button type="button" aria-label="Scroll down" className="flex h-[18px] items-center justify-center bg-[#f0f0f0]"><svg viewBox="0 0 8 6" className="h-1.5 w-2"><path d="M1 1l3 3 3-3" fill="none" stroke="#505050" strokeWidth="2" /></svg></button>
                </div>
              </div>
              <div className="h-[9px]" />
              <TabBar />
            </div>
            <p className="h-[19px] border-b border-[#a9abb8] bg-[#f0f0f0] pl-0.5 text-[11px] leading-[19px]">Coordinate of node</p>
          </section>
        </main>
      </div>

      <footer className="flex h-[19px] shrink-0 items-stretch bg-linear-to-b from-[#dfe1e9] via-[#a6abb6] via-50% to-[#b4b9c4] pl-[436px] font-['Roboto',sans-serif] text-xs text-[#2f333b]">
        <div className="flex gap-[2px] pt-px">
          {statusCells.map(([t, w, on]) => (
            <button key={t} type="button" aria-pressed={on} className={`${w} flex items-center justify-center border-x border-t leading-4 ${on ? 'border-black border-r-white' : 'border-white border-r-[#909090]'}`}>{t}</button>
          ))}
        </div>
        <div className="flex flex-1 justify-end pt-[3px]">
          <span className="mr-auto ml-px w-px bg-[#94979f]" />
          <span className="w-[88px] border-l border-[#94979f]" />
          <span className="w-[88px] border-l border-[#94979f]" />
          <span className="w-[74px] border-l border-[#94979f]" />
          <span className="w-[74px] border-l border-[#94979f]" />
          <span className="flex w-[91px] items-end justify-end border-l border-[#94979f]">
            <svg viewBox="0 0 10 10" className="size-2.5" aria-hidden="true"><path d="M8 0h2v2H8zM4 4h2v2H4zM8 4h2v2H8zM0 8h2v2H0zM4 8h2v2H4zM8 8h2v2H8z" fill="#7c818e" /></svg>
          </span>
        </div>
      </footer>
    </div>
  );
}
